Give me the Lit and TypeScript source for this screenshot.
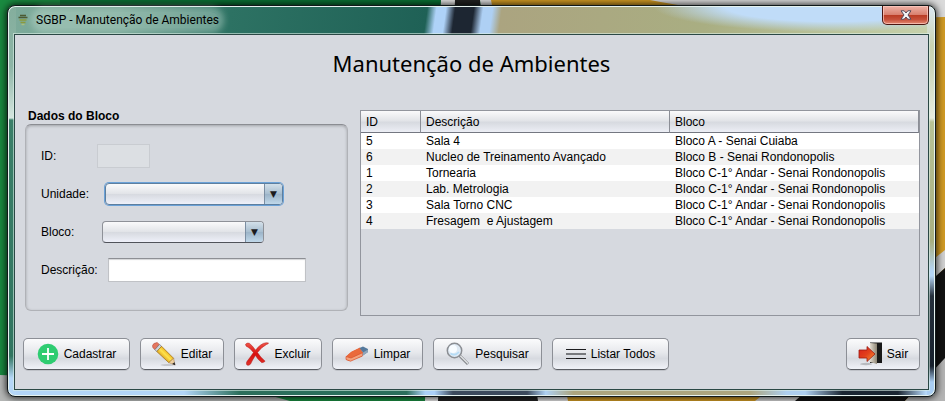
import { LitElement, html, css } from "lit";
import { customElement } from "lit/decorators.js";

interface Ambiente {
  id: number;
  descricao: string;
  bloco: string;
}

const AMBIENTES: Ambiente[] = [
  { id: 5, descricao: "Sala 4", bloco: "Bloco A - Senai Cuiaba" },
  { id: 6, descricao: "Nucleo de Treinamento Avançado", bloco: "Bloco B - Senai Rondonopolis" },
  { id: 1, descricao: "Tornearia", bloco: "Bloco C-1° Andar - Senai Rondonopolis" },
  { id: 2, descricao: "Lab. Metrologia", bloco: "Bloco C-1° Andar - Senai Rondonopolis" },
  { id: 3, descricao: "Sala Torno CNC", bloco: "Bloco C-1° Andar - Senai Rondonopolis" },
  { id: 4, descricao: "Fresagem  e Ajustagem", bloco: "Bloco C-1° Andar - Senai Rondonopolis" },
];

const plusIcon = html`<svg width="22" height="22" viewBox="0 0 22 22" aria-hidden="true">
  <circle cx="11" cy="11" r="10.3" fill="#2ecc71" />
  <path d="M11 5v12M5 11h12" stroke="#fff" stroke-width="1.8" />
</svg>`;

const pencilIcon = html`<svg width="24" height="26" viewBox="1 0 25 26" aria-hidden="true">
  <defs>
    <linearGradient id="wood" x1="0" y1="1" x2="1" y2="0">
      <stop offset="0.3" stop-color="#d99a16" /><stop offset="0.5" stop-color="#ffe34d" /><stop offset="0.7" stop-color="#e8a616" />
    </linearGradient>
  </defs>
  <ellipse cx="17" cy="24.5" rx="7" ry="0.8" fill="#8a8d94" opacity="0.5" />
  <path d="M1.5 4.5Q2 1.5 6.500 1L8.500 3L4 8.500L2 6.500Z" fill="#e5765f" stroke="#b64c3b" stroke-width="0.6" />
  <path d="M4 8.500L8.800 3L11 5L6 10.500Z" fill="#cfd2d8" stroke="#6c7078" stroke-width="0.7" />
  <path d="M6 10.500L11 5L23.500 17.500L18.500 22Z" fill="url(#wood)" stroke="#9a6a12" stroke-width="0.7" />
  <path d="M18.500 22L23.500 17.500L25 24.500Z" fill="#efd0a0" stroke="#9a7040" stroke-width="0.5" />
  <path d="M22 23.500L24.500 21.500L25.300 24.800Z" fill="#26262a" />
</svg>`;

const crossIcon = html`<svg width="24" height="26" viewBox="1 0 25 26" aria-hidden="true">
  <defs>
    <linearGradient id="red" x1="0" y1="0" x2="0" y2="1">
      <stop offset="0" stop-color="#f0564a" /><stop offset="0.5" stop-color="#d80f0f" /><stop offset="1" stop-color="#e0352c" />
    </linearGradient>
  </defs>
  <path d="M1.500 3Q3 1 5.500 1.800Q9 4.500 12 9Q16 3.500 20 2Q23 0.800 25.500 1.500Q25 3 23.500 3Q18.500 5.500 14 11.500Q17 16.500 22 20.500Q20.500 22 18.500 22Q14.500 19 11.800 14.500Q8.500 19.500 6.800 23.500Q5 25.500 3 24.500Q1.800 22.500 3.200 20.500Q6.500 16.500 9.800 11.500Q7 7.500 4.200 6Q1.500 5 1.500 3Z"
    fill="url(#red)" stroke="#b01818" stroke-width="0.500" />
</svg>`;

const eraserIcon = html`<svg width="24" height="18" viewBox="0 0 24 18" aria-hidden="true">
  <path d="M1 11.500L6 7L15 2.500L17.500 8L17 11.500L4 16L1 14.500Z" fill="#e2643c" />
  <path d="M1 11.500L7 6.500L15 3L18 7.500L6 13Z" fill="#ea6a3c" />
  <path d="M1 11.500L6 13L18 7.500L17.500 11L5.500 16.200L1 14.500Z" fill="#f3a27c" stroke="#d9522e" stroke-width="0.700" />
  <path d="M14.500 3L18 1.500L23 4L23 7L17.800 10.500L18 7.500Z" fill="#54799c" />
  <path d="M18 7.500L23 4.500L22.800 7.200L17.600 10.800Z" fill="#8fa5ba" />
</svg>`;

const searchIcon = html`<svg width="24" height="24" viewBox="0 0 24 24" aria-hidden="true">
  <path d="M13.500 13.500L22 22" stroke="#85888d" stroke-width="3" />
  <path d="M14 13.500L22 21.500" stroke="#e4e6e8" stroke-width="1.200" />
  <circle cx="8.500" cy="8.500" r="7.200" fill="#dfeaf4" stroke="#8b8e93" stroke-width="1.500" />
  <circle cx="7" cy="7" r="4" fill="#f8fcff" />
  <path d="M4.500 11.500Q9 14.500 13 10" stroke="#b4dcf6" stroke-width="1.600" fill="none" />
</svg>`;

const listIcon = html`<svg width="20" height="12" viewBox="0 0 20 12" aria-hidden="true">
  <path d="M0 1.500H20M0 10.500H20" stroke="#1c1c1e" stroke-width="1" />
  <path d="M0 6H20" stroke="#77797d" stroke-width="2" />
</svg>`;

const exitIcon = html`<svg width="24" height="24" viewBox="0 0 24 24" aria-hidden="true">
  <defs>
    <linearGradient id="arrow" x1="0" y1="0" x2="1" y2="1">
      <stop offset="0" stop-color="#d81f1a" /><stop offset="0.5" stop-color="#e2401c" /><stop offset="1" stop-color="#ff9a2e" />
    </linearGradient>
    <linearGradient id="door" x1="0" y1="0" x2="1" y2="0">
      <stop offset="0" stop-color="#e0dace" /><stop offset="1" stop-color="#8d8574" />
    </linearGradient>
  </defs>
  <ellipse cx="8" cy="22" rx="6" ry="1.200" fill="#9a9ca2" opacity="0.6" />
  <path d="M12 0.500H24V21H12Z" fill="#181818" />
  <path d="M12 1L19 1.500V22L12 20Z" fill="url(#door)" />
  <path d="M1 8H9V4.500L17 12L9 19.500V16H1Z" fill="url(#arrow)" stroke="#9c1a12" stroke-width="0.8" />
</svg>`;

const appIcon = html`<svg width="10" height="12" viewBox="0 0 10 12" aria-hidden="true">
  <path d="M2 1.500H8M0.500 3.500H9.500" stroke="#4c5a32" stroke-width="1.600" />
  <path d="M1.500 6H8.500M2.500 8.500H7.500" stroke="#8a9a3c" stroke-width="1.600" />
  <path d="M3.500 10.500H6.500" stroke="#a9bf7e" stroke-width="1.400" />
</svg>`;

const closeIcon = html`<svg width="12" height="10" viewBox="0 0 12 10" aria-hidden="true">
  <path d="M1 0.800H4.200L6 3L7.800 0.800H11L8 5L11 9.200H7.800L6 7L4.200 9.200H1L4 5Z" fill="#f4f4f6" stroke="#54495a" stroke-width="1" />
</svg>`;

const wallpaper = html`<svg class="wallpaper" viewBox="0 0 945 401" preserveAspectRatio="none" aria-hidden="true">
  <rect width="945" height="401" fill="#1a8a40" />
  <path d="M60 0H445V5H60Z" fill="#0a7034" />
  <path d="M0 375Q180 380 250 390L290 401H0Z" fill="#b4b6b5" />
  <path d="M441 0H457L440 401H425Z" fill="#e4e4e4" />
  <path d="M455 0H480L540 401H438Z" fill="#222" />
  <path d="M480 0H492L575 401H538Z" fill="#dcdcdc" />
  <path d="M491 0H945V401H568Z" fill="#d09a24" />
  <path d="M650 0H945V17Q760 22 650 0Z" fill="#dadada" />
  <path d="M945 16V290L780 401H900L945 360Z" fill="#c8a32a" />
  <path d="M945 250L755 401H805L945 268Z" fill="#d0d0d0" />
  <path d="M945 268L795 401H905L945 360Z" fill="#121212" />
  <path d="M945 358L905 401H945Z" fill="#b4b4b4" />
</svg>`;

@customElement("app-root")
export class AppRoot extends LitElement {
  static styles = css`
    :host {
      display: block;
      position: relative;
      min-height: 100vh;
      box-sizing: border-box;
      padding: 5px 9px 4px 7px;
      overflow: hidden;
      font: 12px/16px "Liberation Sans", Arial, sans-serif;
      color: #000;
    }
    * {
      box-sizing: border-box;
    }
    .wallpaper {
      position: absolute;
      inset: 0;
      width: 100%;
      height: 100%;
    }
    .window {
      position: relative;
      display: flex;
      flex-direction: column;
      min-height: calc(100vh - 9px);
      padding: 0 6px 6px;
      border: 1px solid #10181a;
      border-radius: 8px;
      box-shadow: inset 0 0 0 1px #e6f2ee, 0 0 7px 1px rgba(0, 0, 0, 0.8);
      background:
        linear-gradient(#84ae9d 0, #8db5a6 60px, #d5e6df 112px, #3b8069 114px, #317560 350px, #b5d7f8 372px) left / 8px 100% no-repeat,
        linear-gradient(#dbe8f4 0, #c9d3b0 40px, #ccd5b8 60px, #e6ebdf 112px, #b8c396 116px, #a8af80 235px, #b5d5f5 265px 270px, #25303c 290px, #16202c 360px, #a9cdf2 376px) right / 8px 100% no-repeat,
        linear-gradient(90deg, #b2d5f8 0 19%, #2b6e5b 25% 43%, #abd0f8 45% 46%, #3c4a5c 48% 56%, #aed0f2 58%, #aca57e 61% 80%, #aecff0 84% 86%, #1b2632 90% 96%, #b5d7f8 99%) bottom / 100% 9px no-repeat,
        radial-gradient(ellipse 180px 26px at 89% 0, #c0dcf8 0 60%, rgba(190, 215, 235, 0) 100%) top / 100% 40px no-repeat,
        linear-gradient(98deg, #7eab9b 0, #6fa18f 12%, #2d7263 24%, #1f6156 45%, #aed2f8 46% 47%, #1d2632 48% 50%, #aed0f4 51% 52%, #aba480 53%, #a9ae82 75%, #c7d2ac 100%) top / 100% 40px no-repeat,
        #d6d9df;
    }
    .titlebar {
      display: flex;
      align-items: flex-start;
      height: 28px;
    }
    .caption {
      display: flex;
      align-items: center;
      gap: 8px;
      flex: 1;
      height: 28px;
      padding-left: 4px;
    }
    .caption-text {
      font: 12px/16px Roboto, "Noto Sans", sans-serif;
      border-radius: 8px;
      background: rgba(200, 225, 215, 0.4);
      box-shadow: 0 0 6px 5px rgba(200, 225, 215, 0.4);
    }
    .close {
      display: flex;
      align-items: center;
      justify-content: center;
      width: 47px;
      height: 19px;
      padding: 0;
      border: 1px solid #4a1712;
      border-top: 0;
      border-radius: 0 0 5px 5px;
      box-shadow: inset 0 0 0 1px rgba(255, 205, 195, 0.7);
      background: linear-gradient(#eeb2a6, #d9806f 48%, #b93a22 50%, #c6503a 75%, #e38a72);
    }
    .content {
      flex: 1;
      display: flex;
      flex-direction: column;
      padding: 12px 8px 17px;
      border: 1px solid #2b4845;
      box-shadow: 0 0 0 1px rgba(220, 240, 232, 0.6);
      background: #d6d9df;
    }
    h1 {
      margin: 0;
      font: 22px/32px "Noto Sans", "Open Sans", sans-serif;
      text-align: center;
    }
    .main {
      display: grid;
      grid-template-columns: 326px 1fr;
      column-gap: 11px;
      align-items: start;
      margin-top: 30px;
    }
    .dados {
      min-width: 0;
    }
    h2 {
      margin: 0 0 0 5px;
      font-size: 12px;
      line-height: 15px;
    }
    .group {
      display: flex;
      flex-direction: column;
      gap: 14px;
      margin: 0 1px 0 2px;
      padding: 19px 15px 28px;
      border: 1px solid #b0b2b7;
      border-top-color: #8b8d92;
      border-radius: 6px;
      box-shadow: inset 0 1px 3px rgba(0, 0, 0, 0.25);
    }
    .field {
      display: flex;
      align-items: center;
      height: 24px;
    }
    .field-label {
      min-width: 56px;
    }
    input {
      height: 24px;
      padding: 2px 6px;
      font: inherit;
      border: 1px solid #c0c2c6;
      border-top: 1px solid #8d8f94;
      border-radius: 0;
      background: #fff;
      box-shadow: inset 0 1px 1px #d3d4d6;
      outline: 0;
    }
    .input-id {
      width: 53px;
      border-color: #c9ccd1;
      background: #dcdfe3;
      box-shadow: none;
    }
    .input-descricao {
      flex: 0 1 198px;
      min-width: 0;
      margin-left: 10px;
    }
    .combo {
      position: relative;
      display: flex;
      height: 22px;
      border: 1px solid #8e9198;
      border-bottom-color: #50535a;
      border-radius: 4px;
      overflow: hidden;
      background: linear-gradient(#fafafb, #e2e4e8 48%, #d7dae0 52%, #eef0f9);
    }
    .combo::after {
      content: "▼";
      position: absolute;
      inset: 0 0 0 auto;
      width: 17px;
      border-left: 1px solid #7b8ea2;
      font: 9px/20px "DejaVu Sans", sans-serif;
      text-align: center;
      color: #1b1b1d;
      background: linear-gradient(#d3e0ea, #a9bfd0 48%, #9cb4c8 52%, #c0d8ea);
      pointer-events: none;
    }
    .combo select {
      flex: 1;
      appearance: none;
      border: 0;
      padding: 0 20px 0 6px;
      font: inherit;
      background: none;
      outline: 0;
    }
    .combo-unidade {
      width: 178px;
      margin-left: 16px;
      box-shadow: 0 0 0 1px #6ba2d8;
      border-color: #5e7f9f;
    }
    .combo-bloco {
      width: 162px;
      margin-left: 5px;
    }
    .scroll {
      min-width: 0;
      min-height: 206px;
      margin-top: 1px;
      border: 1px solid #92959d;
    }
    table {
      width: 100%;
      table-layout: fixed;
      border-collapse: separate;
      border-spacing: 0;
    }
    .col-id {
      width: 60px;
    }
    .col-descricao {
      width: 249px;
    }
    th {
      height: 22px;
      padding: 0 5px;
      font-weight: normal;
      text-align: left;
      border-right: 1px solid #8b8e96;
      border-bottom: 1px solid #747781;
      background: linear-gradient(#fafafb, #e2e4e8 46%, #d7dae0 54%, #eceef5);
    }
    td {
      height: 16px;
      padding: 0 5px;
      white-space: pre;
      background: #fff;
    }
    tr:nth-child(even) td {
      background: #f2f2f2;
    }
    .actions {
      display: grid;
      grid-template-columns: 107px 84px 88px 91px 109px 117px minmax(74px, 1fr);
      gap: 10px;
      margin-top: 22px;
    }
    .action {
      display: flex;
      align-items: center;
      justify-content: center;
      gap: 5px;
      height: 32px;
      padding: 0;
      font: inherit;
      color: #000;
      border: 1px solid #8c8f96;
      border-bottom-color: #5a5d63;
      border-radius: 5px;
      box-shadow: 0 1px 0 #bfc2c8;
      background: linear-gradient(#fbfbfc, #e6e8ec 45%, #d7dae0 65%, #f0f2f8);
      white-space: nowrap;
    }
    .action svg {
      flex: none;
    }
    .action-sair {
      width: 74px;
      justify-self: end;
    }
  `;

  render() {
    return html`
      ${wallpaper}
      <div class="window">
        <header class="titlebar">
          <div class="caption">${appIcon}<span class="caption-text">SGBP - Manutenção de Ambientes</span></div>
          <button class="close" aria-label="Fechar">${closeIcon}</button>
        </header>
        <main class="content">
          <h1>Manutenção de Ambientes</h1>
          <div class="main">
            <section class="dados">
              <h2>Dados do Bloco</h2>
              <div class="group">
                <div class="field">
                  <label class="field-label" for="id">ID:</label>
                  <input class="input-id" id="id" type="text" disabled />
                </div>
                <div class="field">
                  <label for="unidade">Unidade:</label>
                  <div class="combo combo-unidade"><select id="unidade"></select></div>
                </div>
                <div class="field">
                  <label class="field-label" for="bloco">Bloco:</label>
                  <div class="combo combo-bloco"><select id="bloco"></select></div>
                </div>
                <div class="field">
                  <label for="descricao">Descrição:</label>
                  <input class="input-descricao" id="descricao" type="text" />
                </div>
              </div>
            </section>
            <div class="scroll">
              <table>
                <colgroup><col class="col-id" /><col class="col-descricao" /><col /></colgroup>
                <thead>
                  <tr><th>ID</th><th>Descrição</th><th>Bloco</th></tr>
                </thead>
                <tbody>
                  ${AMBIENTES.map((a) => html`<tr><td>${a.id}</td><td>${a.descricao}</td><td>${a.bloco}</td></tr>`)}
                </tbody>
              </table>
            </div>
          </div>
          <div class="actions">
            <button class="action">${plusIcon}Cadastrar</button>
            <button class="action">${pencilIcon}Editar</button>
            <button class="action">${crossIcon}Excluir</button>
            <button class="action">${eraserIcon}Limpar</button>
            <button class="action">${searchIcon}Pesquisar</button>
            <button class="action">${listIcon}Listar Todos</button>
            <button class="action action-sair">${exitIcon}Sair</button>
          </div>
        </main>
      </div>
    `;
  }
}
